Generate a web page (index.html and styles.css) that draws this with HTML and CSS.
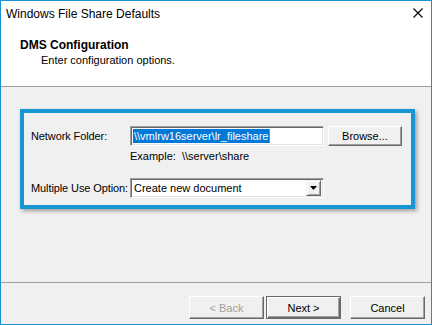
FILE: index.html
```html
<!DOCTYPE html>
<html lang="en">
<head>
    <meta charset="UTF-8">
    <title>Windows File Share Defaults</title>
    <link rel="stylesheet" href="styles.css">
</head>
<body>
    <div class="window">
        <div class="header">
            <div class="titlebar">
                <span class="title">Windows File Share Defaults</span>
                <svg class="close" width="10" height="10" viewBox="0 0 10 10">
                    <path d="M0.5 0.5 L9.5 9.5 M9.5 0.5 L0.5 9.5" stroke="#000" stroke-width="1.1" fill="none"/>
                </svg>
            </div>
            <div class="heading">
                <div class="heading-title">DMS Configuration</div>
                <div class="heading-sub">Enter configuration options.</div>
            </div>
        </div>

        <div class="main">
            <div class="frame">
                <div class="row">
                    <label class="label">Network Folder:</label>
                    <div class="textbox"><span class="selected">\\vmlrw16server\lr_fileshare</span><span class="caret"></span></div>
                    <button class="btn browse">Browse...</button>
                </div>
                <div class="example">Example:&nbsp; \\server\share</div>
                <div class="row">
                    <label class="label">Multiple Use Option:</label>
                    <div class="combo">
                        <span class="combo-text">Create new document</span>
                        <span class="combo-arrow">
                            <svg width="7" height="4" viewBox="0 0 7 4"><path d="M0 0 H7 L3.5 4 Z" fill="#000"/></svg>
                        </span>
                    </div>
                </div>
            </div>
        </div>

        <div class="footer">
            <button class="btn disabled">&lt; Back</button>
            <button class="btn default">Next &gt;</button>
            <button class="btn cancel">Cancel</button>
        </div>
    </div>
</body>
</html>
```

FILE: styles.css
```css
html, body {
    margin: 0;
    padding: 0;
}
body {
    font-family: "Liberation Sans", Arial, sans-serif;
    font-size: 11px;
    color: #000;
    background: #f0f0f0;
}
.window {
    width: 432px;
    height: 325px;
    box-sizing: border-box;
    border: 1px solid #1c90d4;
    display: flex;
    flex-direction: column;
    background: #f0f0f0;
}
.header {
    height: 86px;
    box-sizing: border-box;
    background: #fff;
    border-bottom: 1px solid #a0a0a0;
}
.titlebar {
    height: 29px;
    display: flex;
    align-items: center;
    justify-content: space-between;
    padding: 0 8px 0 5px;
}
.title {
    font-size: 12px;
    margin-top: -3px;
}
.close {
    margin-top: -6px;
}
.heading {
    padding: 8px 0 0 19px;
}
.heading-title {
    font-weight: bold;
    font-size: 12px;
    line-height: 14px;
}
.heading-sub {
    padding-left: 21px;
    line-height: 14px;
    margin-top: 1px;
}
.main {
    flex: 1;
    padding: 22px 0 0 19px;
}
.frame {
    width: 395px;
    height: 100px;
    box-sizing: border-box;
    border: 4px solid #1796d3;
    box-shadow: 2px 2px 4px rgba(0, 0, 0, 0.35);
    padding: 13px 0 0 7px;
}
.row {
    display: flex;
    align-items: center;
    height: 20px;
}
.label {
    width: 99px;
    flex-shrink: 0;
    white-space: nowrap;
    letter-spacing: -0.1px;
}
.textbox {
    width: 194px;
    height: 20px;
    box-sizing: border-box;
    background: #fff;
    border: 1px solid;
    border-color: #a0a0a0 #fff #fff #a0a0a0;
    box-shadow: inset 1px 1px 0 #696969, inset -1px -1px 0 #e3e3e3;
    padding: 2px 0 0 2px;
    display: flex;
    align-items: flex-start;
}
.selected {
    background: #0078d7;
    color: #fff;
    line-height: 14px;
    padding: 0 1px;
}
.caret {
    width: 1px;
    height: 14px;
    background: #d07020;
}
.btn {
    font-family: "Liberation Sans", Arial, sans-serif;
    font-size: 11px;
    color: #000;
    background: #f0f0f0;
    border: 1px solid;
    border-color: #fff #696969 #696969 #fff;
    box-shadow: inset -1px -1px 0 #a0a0a0;
    padding: 0;
    margin: 0;
}
.browse {
    width: 74px;
    height: 20px;
    margin-left: 4px;
}
.example {
    height: 20px;
    line-height: 20px;
    padding-left: 99px;
    margin-bottom: 12px;
}
.combo {
    width: 194px;
    height: 20px;
    box-sizing: border-box;
    background: #fff;
    border: 1px solid;
    border-color: #a0a0a0 #fff #fff #a0a0a0;
    box-shadow: inset 1px 1px 0 #696969, inset -1px -1px 0 #e3e3e3;
    display: flex;
    align-items: center;
    justify-content: space-between;
    padding: 1px 2px 1px 3px;
}
.combo-arrow {
    width: 15px;
    height: 16px;
    box-sizing: border-box;
    background: #f0f0f0;
    border: 1px solid;
    border-color: #f0f0f0 #696969 #696969 #f0f0f0;
    box-shadow: inset 1px 1px 0 #fff, inset -1px -1px 0 #a0a0a0;
    display: flex;
    align-items: center;
    justify-content: center;
}
.footer {
    height: 42px;
    box-sizing: border-box;
    border-top: 1px solid #a0a0a0;
    display: flex;
    justify-content: flex-end;
    padding: 13px 6px 0 0;
}
.footer .btn {
    width: 75px;
    height: 23px;
}
.disabled {
    color: #a0a0a0;
}
.default {
    margin-left: 2px;
    border-color: #696969;
    box-shadow: inset 1px 1px 0 #fff, inset -1px -1px 0 #696969, inset -2px -2px 0 #a0a0a0;
}
.cancel {
    margin-left: 9px;
}
```
